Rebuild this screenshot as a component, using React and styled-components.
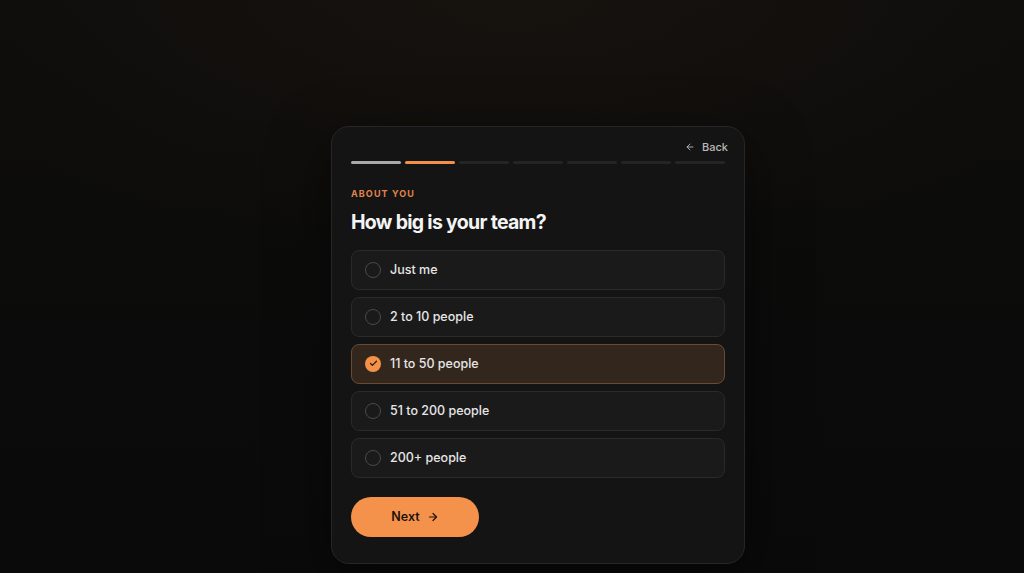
import React, { useState } from "react";
import styled, { createGlobalStyle } from "styled-components";
import { ArrowLeft, ArrowRight, Check } from "lucide-react";

const Global = createGlobalStyle`
  * { box-sizing: border-box; }
  html, body { margin: 0; padding: 0; background: #0b0b0b; }
  body { font-family: Inter, "Noto Sans", sans-serif; -webkit-font-smoothing: antialiased; }
`;

const Page = styled.div`
  min-height: 100vh;
  display: flex;
  justify-content: center;
  align-items: flex-start;
  padding: 126px 0 0 52px;
  background:
    radial-gradient(ellipse 60% 45% at 50% 0%, rgba(60, 42, 24, 0.18), rgba(0, 0, 0, 0) 100%),
    linear-gradient(180deg, #0e0d0c 0%, #0a0a0a 100%);
`;

const Card = styled.div`
  width: 414px;
  background: #141414;
  border: 1px solid #262626;
  border-radius: 18px;
  padding: 11px 19px 26px;
  display: flex;
  flex-direction: column;
  box-shadow: 0 20px 60px rgba(0, 0, 0, 0.5);
`;

const TopRow = styled.div`
  display: flex;
  justify-content: flex-end;
  margin-right: -3px;
`;

const BackButton = styled.button`
  display: flex;
  align-items: center;
  gap: 7px;
  background: none;
  border: none;
  padding: 2px 0;
  color: #b8b8b8;
  font-family: Inter, sans-serif;
  font-size: 11px;
  font-weight: 500;
  cursor: pointer;
`;

const Progress = styled.div`
  display: grid;
  grid-template-columns: repeat(7, 1fr);
  gap: 4px;
  margin-top: 5px;
`;

const Segment = styled.div`
  height: 2.5px;
  border-radius: 2px;
  background: ${(p) => (p.$state === "done" ? "#a9a9a9" : p.$state === "active" ? "#f28f4a" : "#242424")};
`;

const Eyebrow = styled.div`
  margin-top: 24px;
  color: #e0854a;
  font-size: 9px;
  font-weight: 700;
  letter-spacing: 1.1px;
  text-transform: uppercase;
`;

const Title = styled.h1`
  margin: 10px 0 0;
  color: #f4f4f4;
  font-size: 19.5px;
  font-weight: 700;
  letter-spacing: -0.7px;
  line-height: 26px;
`;

const Options = styled.div`
  display: flex;
  flex-direction: column;
  gap: 7px;
  margin-top: 15px;
`;

const Option = styled.button`
  display: flex;
  align-items: center;
  gap: 9px;
  height: 40px;
  padding: 0 12px 0 13px;
  border-radius: 8px;
  border: 1px solid ${(p) => (p.$selected ? "#6a4a30" : "#2a2a2a")};
  background: ${(p) => (p.$selected ? "#33271d" : "#1a1a1a")};
  color: #e6e6e6;
  font-family: Inter, sans-serif;
  font-size: 12.5px;
  font-weight: 500;
  text-align: left;
  cursor: pointer;
`;

const Radio = styled.span`
  width: 16px;
  height: 16px;
  border-radius: 50%;
  flex: none;
  display: flex;
  align-items: center;
  justify-content: center;
  border: ${(p) => (p.$selected ? "none" : "1.6px solid #4a4a4a")};
  background: ${(p) => (p.$selected ? "#f4924a" : "transparent")};
  color: #2a1a0d;
`;

const NextButton = styled.button`
  margin-top: 19px;
  width: 128px;
  height: 40px;
  border-radius: 999px;
  border: none;
  background: #f4924c;
  color: #1e130a;
  font-family: Inter, sans-serif;
  font-size: 12.5px;
  font-weight: 600;
  display: flex;
  align-items: center;
  justify-content: center;
  gap: 7px;
  cursor: pointer;
`;

const choices = ["Just me", "2 to 10 people", "11 to 50 people", "51 to 200 people", "200+ people"];
const steps = ["done", "active", "todo", "todo", "todo", "todo", "todo"];

export default function App() {
  const [selected, setSelected] = useState(2);
  return (
    <>
      <Global />
      <Page>
        <Card>
          <TopRow>
            <BackButton>
              <ArrowLeft size={10} strokeWidth={2.2} />
              Back
            </BackButton>
          </TopRow>
          <Progress>
            {steps.map((s, i) => (
              <Segment key={i} $state={s} />
            ))}
          </Progress>
          <Eyebrow>About you</Eyebrow>
          <Title>How big is your team?</Title>
          <Options>
            {choices.map((c, i) => (
              <Option key={c} $selected={i === selected} onClick={() => setSelected(i)}>
                <Radio $selected={i === selected}>
                  {i === selected && <Check size={9} strokeWidth={3.2} />}
                </Radio>
                {c}
              </Option>
            ))}
          </Options>
          <NextButton>
            Next
            <ArrowRight size={12} strokeWidth={2.4} />
          </NextButton>
        </Card>
      </Page>
    </>
  );
}
